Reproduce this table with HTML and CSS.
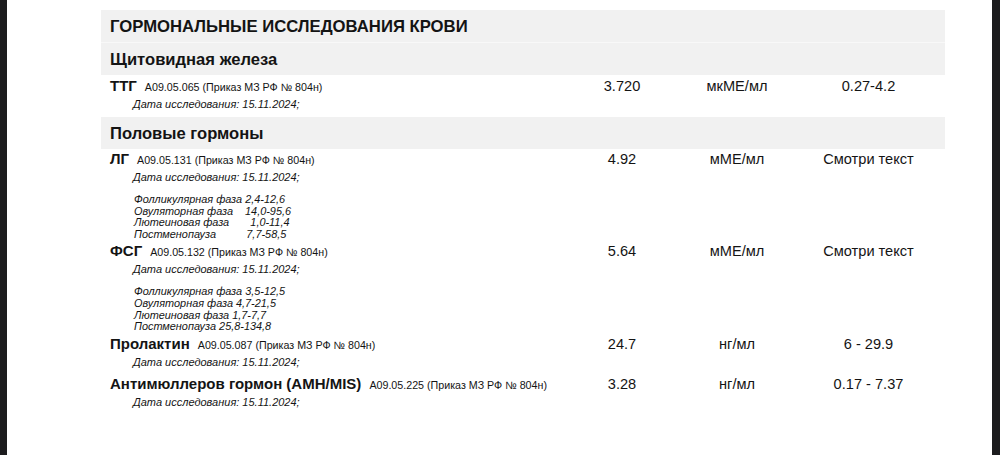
FILE: index.html
```html
<!DOCTYPE html>
<html lang="ru">
<head>
<meta charset="utf-8">
<title>Гормональные исследования крови</title>
<link rel="stylesheet" href="styles.css">
</head>
<body>
<div class="frame">
  <div class="page">
    <div class="sheet">
      <div class="band title-band">ГОРМОНАЛЬНЫЕ ИССЛЕДОВАНИЯ КРОВИ</div>
      <div class="band sub-band">Щитовидная железа</div>

      <div class="test test-ttg">
        <div class="name-cell">
          <div class="name-line"><span class="name">ТТГ</span><span class="code">A09.05.065 (Приказ МЗ РФ № 804н)</span></div>
          <div class="date">Дата исследования: 15.11.2024;</div>
        </div>
        <div class="val">3.720</div>
        <div class="val">мкМЕ/мл</div>
        <div class="val">0.27-4.2</div>
      </div>

      <div class="band sub-band">Половые гормоны</div>

      <div class="test">
        <div class="name-cell">
          <div class="name-line"><span class="name">ЛГ</span><span class="code">A09.05.131 (Приказ МЗ РФ № 804н)</span></div>
          <div class="date">Дата исследования: 15.11.2024;</div>
          <div class="phases">Фолликулярная фаза 2,4-12,6
Овуляторная фаза    14,0-95,6
Лютеиновая фаза       1,0-11,4
Постменопауза          7,7-58,5</div>
        </div>
        <div class="val">4.92</div>
        <div class="val">мМЕ/мл</div>
        <div class="val">Смотри текст</div>
      </div>

      <div class="test">
        <div class="name-cell">
          <div class="name-line"><span class="name">ФСГ</span><span class="code">A09.05.132 (Приказ МЗ РФ № 804н)</span></div>
          <div class="date">Дата исследования: 15.11.2024;</div>
          <div class="phases">Фолликулярная фаза 3,5-12,5
Овуляторная фаза 4,7-21,5
Лютеиновая фаза 1,7-7,7
Постменопауза 25,8-134,8</div>
        </div>
        <div class="val">5.64</div>
        <div class="val">мМЕ/мл</div>
        <div class="val">Смотри текст</div>
      </div>

      <div class="test">
        <div class="name-cell">
          <div class="name-line"><span class="name">Пролактин</span><span class="code">A09.05.087 (Приказ МЗ РФ № 804н)</span></div>
          <div class="date">Дата исследования: 15.11.2024;</div>
        </div>
        <div class="val">24.7</div>
        <div class="val">нг/мл</div>
        <div class="val">6 - 29.9</div>
      </div>

      <div class="test test-amh">
        <div class="name-cell">
          <div class="name-line"><span class="name">Антимюллеров гормон (AMH/MIS)</span><span class="code">A09.05.225 (Приказ МЗ РФ № 804н)</span></div>
          <div class="date">Дата исследования: 15.11.2024;</div>
        </div>
        <div class="val">3.28</div>
        <div class="val">нг/мл</div>
        <div class="val">0.17 - 7.37</div>
      </div>
    </div>
  </div>
</div>
</body>
</html>
```

FILE: styles.css
```css
html, body {
  margin: 0;
  padding: 0;
  height: 100%;
}

body {
  background: #1c1c1e;
  font-family: "Liberation Sans", Arial, sans-serif;
  color: #141414;
}

.frame {
  display: flex;
  height: 455px;
  padding: 0 8px 0 7px;
}

.page {
  flex: 1;
  background: #ffffff;
  padding-top: 10px;
}

.sheet {
  margin-left: 94px;
  width: 844px;
}

.band {
  background: #f1f1f1;
  padding-left: 9px;
  height: 32px;
  display: flex;
  align-items: center;
  font-weight: bold;
}

.title-band {
  font-size: 16.7px;
  padding-top: 2px;
  box-sizing: border-box;
  border-bottom: 1px solid #f8f8f8;
  height: 33px;
}

.sub-band {
  font-size: 16.6px;
  padding-top: 1px;
  height: 32px;
  box-sizing: border-box;
}

.test {
  display: grid;
  grid-template-columns: 461px 120px 110px 153px;
  align-items: start;
  padding-bottom: 1px;
}

.test-ttg {
  padding-top: 1px;
  padding-bottom: 5px;
}

.test-amh {
  padding-top: 3px;
}

.name-cell {
  padding-left: 9px;
}

.name-line {
  height: 20px;
  line-height: 20px;
  white-space: nowrap;
}

.name {
  font-weight: bold;
  font-size: 15px;
}

.code {
  font-size: 10.7px;
  margin-left: 8px;
}

.date {
  font-style: italic;
  font-size: 11px;
  line-height: 16px;
  padding-left: 23px;
}

.phases {
  white-space: pre;
  font-style: italic;
  font-size: 10.9px;
  line-height: 11.6px;
  padding-left: 24px;
  margin-top: 9px;
}

.val {
  text-align: center;
  font-size: 14.6px;
  line-height: 20px;
}
```
